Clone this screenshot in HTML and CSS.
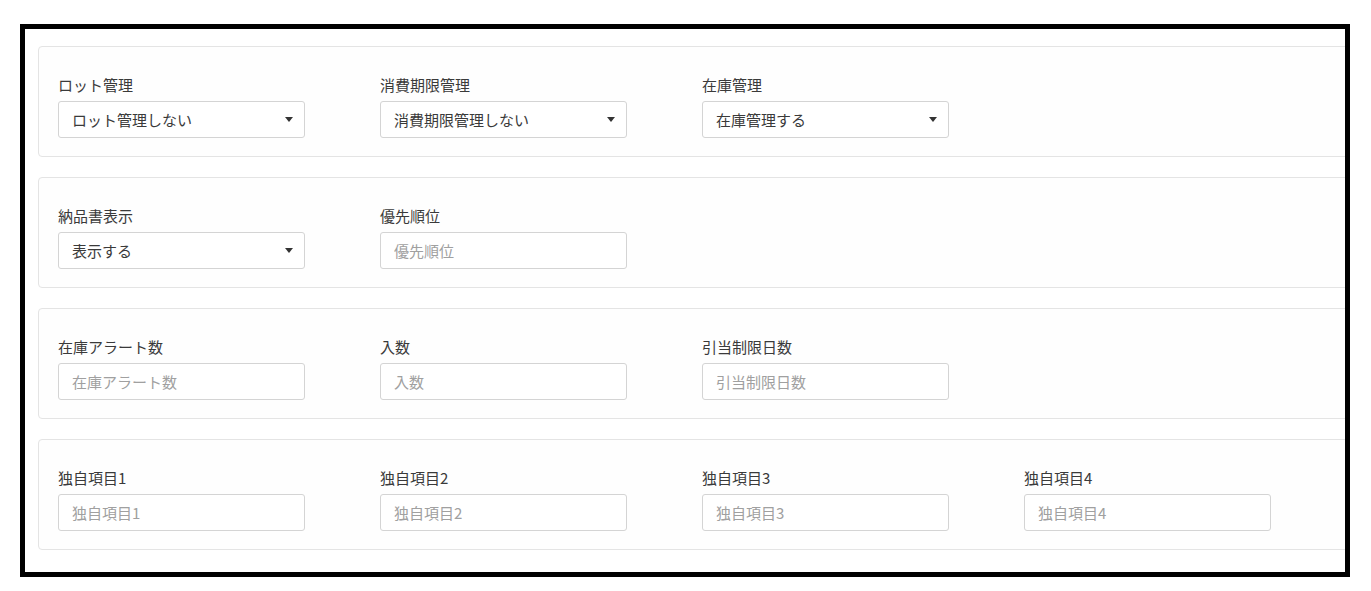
FILE: index.html
```html
<!DOCTYPE html>
<html lang="ja">
<head>
    <meta charset="UTF-8">
    <title>商品設定</title>
    <link rel="stylesheet" href="styles.css">
</head>
<body>
    <div class="frame">
        <div class="panel">
            <div class="row">
                <div class="field">
                    <label class="field__label">ロット管理</label>
                    <div class="select">
                        <select>
                            <option>ロット管理しない</option>
                            <option>ロット管理する</option>
                        </select>
                        <span class="select__caret"></span>
                    </div>
                </div>
                <div class="field">
                    <label class="field__label">消費期限管理</label>
                    <div class="select">
                        <select>
                            <option>消費期限管理しない</option>
                            <option>消費期限管理する</option>
                        </select>
                        <span class="select__caret"></span>
                    </div>
                </div>
                <div class="field">
                    <label class="field__label">在庫管理</label>
                    <div class="select">
                        <select>
                            <option>在庫管理する</option>
                            <option>在庫管理しない</option>
                        </select>
                        <span class="select__caret"></span>
                    </div>
                </div>
            </div>
        </div>

        <div class="panel">
            <div class="row">
                <div class="field">
                    <label class="field__label">納品書表示</label>
                    <div class="select">
                        <select>
                            <option>表示する</option>
                            <option>表示しない</option>
                        </select>
                        <span class="select__caret"></span>
                    </div>
                </div>
                <div class="field">
                    <label class="field__label">優先順位</label>
                    <input class="input" type="text" placeholder="優先順位">
                </div>
            </div>
        </div>

        <div class="panel">
            <div class="row">
                <div class="field">
                    <label class="field__label">在庫アラート数</label>
                    <input class="input" type="text" placeholder="在庫アラート数">
                </div>
                <div class="field">
                    <label class="field__label">入数</label>
                    <input class="input" type="text" placeholder="入数">
                </div>
                <div class="field">
                    <label class="field__label">引当制限日数</label>
                    <input class="input" type="text" placeholder="引当制限日数">
                </div>
            </div>
        </div>

        <div class="panel">
            <div class="row">
                <div class="field">
                    <label class="field__label">独自項目1</label>
                    <input class="input" type="text" placeholder="独自項目1">
                </div>
                <div class="field">
                    <label class="field__label">独自項目2</label>
                    <input class="input" type="text" placeholder="独自項目2">
                </div>
                <div class="field">
                    <label class="field__label">独自項目3</label>
                    <input class="input" type="text" placeholder="独自項目3">
                </div>
                <div class="field">
                    <label class="field__label">独自項目4</label>
                    <input class="input" type="text" placeholder="独自項目4">
                </div>
            </div>
        </div>
    </div>
</body>
</html>
```

FILE: styles.css
```css
body {
    margin: 0;
    padding: 24px 0 0 20px;
    background: #fff;
    font-family: "Noto Sans CJK JP", "Noto Sans", sans-serif;
    color: #333;
}
.frame {
    box-sizing: border-box;
    width: 1330px;
    height: 553px;
    border: 5px solid #000;
    padding: 17px 0 0 13px;
    overflow: hidden;
    display: flex;
    flex-direction: column;
    gap: 20px;
}
.panel {
    box-sizing: border-box;
    width: 1340px;
    height: 111px;
    flex-shrink: 0;
    border: 1px solid #e4e4e4;
    border-radius: 4px;
    background: #fefefe;
    padding: 28px 19px 17px;
}
.row {
    display: flex;
    gap: 75px;
}
.field {
    width: 247px;
    display: flex;
    flex-direction: column;
    gap: 6px;
}
.field__label {
    font-size: 15px;
    line-height: 20px;
    color: #3a3a3a;
}
.input,
.select select {
    box-sizing: border-box;
    width: 247px;
    height: 37px;
    border: 1px solid #d4d4d4;
    border-radius: 3px;
    background: #fff;
    padding: 0 13px;
    font-family: inherit;
    font-size: 15px;
    color: #3a3a3a;
    outline: none;
}
.input::placeholder {
    color: #a0a0a0;
}
.select {
    position: relative;
}
.select select {
    appearance: none;
    -webkit-appearance: none;
    display: block;
}
.select__caret {
    position: absolute;
    right: 12px;
    top: 16px;
    width: 0;
    height: 0;
    border-left: 4px solid transparent;
    border-right: 4px solid transparent;
    border-top: 5px solid #333;
}
```
